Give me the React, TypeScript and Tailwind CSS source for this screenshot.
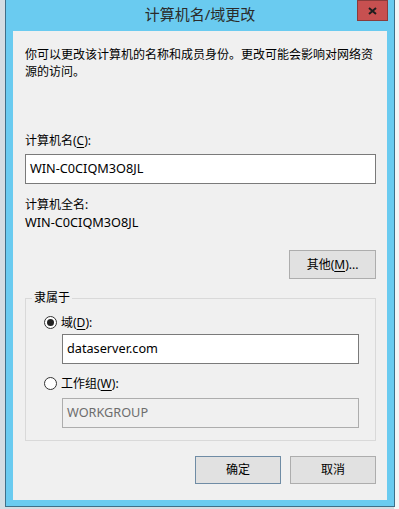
import React from "react";

const font = {
  fontFamily: '"Segoe UI","Noto Sans","Noto Sans CJK SC",sans-serif',
};

function U({ c }: { c: string }) {
  return <span className="underline underline-offset-2">{c}</span>;
}

function Radio({ checked }: { checked: boolean }) {
  return (
    <span className="w-[13px] h-[13px] rounded-full border border-[#333] bg-white flex items-center justify-center shrink-0">
      {checked && <span className="w-[7px] h-[7px] rounded-full bg-[#222]" />}
    </span>
  );
}

export default function App() {
  return (
    <div
      className="relative w-[399px] h-[509px] overflow-hidden bg-[#d3dde3]"
      style={font}
    >
      {/* right desktop strip */}
      <div className="absolute right-0 top-0 w-[5px] h-full bg-[#f4f6f7]" />
      <div className="absolute left-[5px] top-[-8px] w-[390px] h-[515px] border border-[#3f6f88] bg-[#6acbf0] flex flex-col">
        {/* title bar */}
        <div className="relative h-[38px] shrink-0 flex items-end justify-center pb-[7px]">
          <span className="text-[15px] leading-[20px] text-[#2b2b2b]">
            计算机名/域更改
          </span>
          <div className="absolute right-[6px] top-[7px] w-[31px] h-[21px] bg-[#c75050] border border-[#8a3b3b] flex items-center justify-center">
            <svg width="9" height="8" viewBox="0 0 9 8">
              <path d="M1 1 L8 7 M8 1 L1 7" stroke="#1e1e1e" strokeWidth="2" />
            </svg>
          </div>
        </div>
        {/* client */}
        <div className="mx-[7px] h-[469px] bg-[#f0f0f0] flex flex-col px-[12px] text-[12px] text-black">
          <p className="mt-[15px] leading-[17px]">
            你可以更改该计算机的名称和成员身份。更改可能会影响对网络资源的访问。
          </p>
          <div className="mt-[52px] leading-[17px]">
            计算机名(<U c="C" />):
          </div>
          <div className="mt-[5px] h-[30px] w-[351px] border border-[#7a7a7a] bg-white flex items-center px-[4px] text-[12.7px]">
            WIN-C0CIQM3O8JL
          </div>
          <div className="mt-[12px] leading-[17px]">计算机全名:</div>
          <div className="mt-[1px] leading-[17px] text-[12.7px]">WIN-C0CIQM3O8JL</div>
          <div className="mt-[19px] flex justify-end w-[351px]">
            <div className="w-[87px] h-[29px] bg-[#e1e1e1] border border-[#adadad] flex items-center justify-center">
              其他(<U c="M" />)...
            </div>
          </div>
          {/* group box */}
          <div className="relative mt-[19px] w-[351px] h-[143px] border border-[#d9d9d9] flex flex-col pl-[18px]">
            <span className="absolute left-[6px] top-[-10px] px-[2px] bg-[#f0f0f0] leading-[17px]">
              隶属于
            </span>
            <div className="mt-[15px] flex items-center gap-[4px] leading-[17px]">
              <Radio checked />
              <span>
                域(<U c="D" />):
              </span>
            </div>
            <div className="mt-[3px] ml-[18px] h-[30px] w-[297px] border border-[#7a7a7a] bg-white flex items-center px-[4px] text-[12.7px]">
              dataserver.com
            </div>
            <div className="mt-[11px] flex items-center gap-[4px] leading-[17px]">
              <Radio checked={false} />
              <span>
                工作组(<U c="W" />):
              </span>
            </div>
            <div className="mt-[6px] ml-[18px] h-[30px] w-[297px] border border-[#adadad] bg-[#f0f0f0] flex items-center px-[4px] text-[#6d6d6d] text-[12.7px]">
              WORKGROUP
            </div>
          </div>
          <div className="mt-[15px] w-[351px] flex justify-end gap-[9px]">
            <div className="w-[86px] h-[28px] bg-[#e1e1e1] border border-[#6f8ca5] flex items-center justify-center">
              确定
            </div>
            <div className="w-[86px] h-[28px] bg-[#e1e1e1] border border-[#adadad] flex items-center justify-center">
              取消
            </div>
          </div>
        </div>
      </div>
    </div>
  );
}
